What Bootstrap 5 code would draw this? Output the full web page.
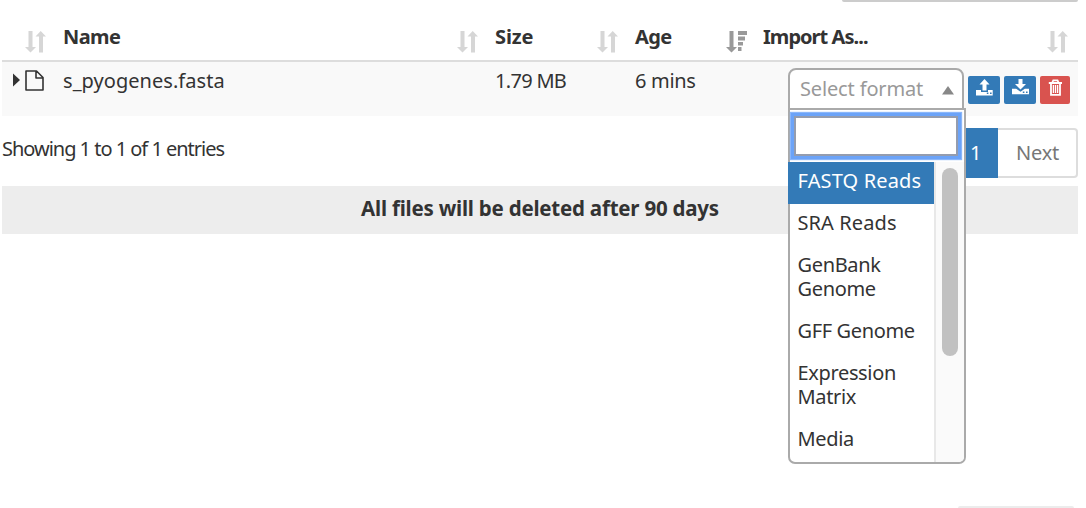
<!DOCTYPE html>
<html lang="en">
<head>
<meta charset="utf-8">
<title>Staging files</title>
<link href="https://cdn.jsdelivr.net/npm/bootstrap@5.3.0/dist/css/bootstrap.min.css" rel="stylesheet">
<style>
body{height:508px;width:1086px;overflow:hidden;background:#fff;color:#333;font-family:"Noto Sans","Open Sans",sans-serif;font-size:20px;line-height:28px}
.page{width:1076px;height:508px;margin-left:2px;position:relative}
.search-edge{width:236px;height:2px;background:#ccc;border-radius:0 0 4px 4px}
.files{table-layout:fixed;width:1076px;--bs-table-bg:transparent;color:#333;line-height:28px}
.files>thead>tr>th{height:59px;padding:21px 10px 0 7px;border-bottom:2px solid #ddd;vertical-align:top;letter-spacing:-.6px}
.files>thead>tr>th:last-child{padding-left:6px;letter-spacing:-.95px}
.files>tbody>tr>td{height:55px;padding:5px 6px 0 7px;border:0;background:#f9f9f9;vertical-align:top}
.files thead svg{margin-top:8px;flex:none;display:block}
.t{display:inline-block;white-space:nowrap}
.picker{width:176px;height:42px;border:2px solid #aaa;border-radius:8px 8px 0 0;background:#fff;color:#999;padding:4px 8px 0 10px;line-height:30px;letter-spacing:-.15px}
.picker svg{margin-top:12px}
.menu{left:0;top:40px;width:178px;height:356px;border:2px solid #aaa;border-radius:0 0 7px 7px;background:#fff;z-index:5}
.menu .query{width:164px;height:40px;margin:6px 0 6px 4px;border:2px solid #949cae;border-radius:0;box-shadow:0 0 0 3px #6ba3f8,0 0 1px 4px #8ab6fa;padding:0;outline:0;display:block}
.options{width:146px;margin-left:-2px;line-height:24px;letter-spacing:-.35px}
.options li{padding:7px 0 11px 9.5px;width:146px}
.options li.active{background:#337ab7;color:#fff;letter-spacing:.15px}
.options li.wide{letter-spacing:.1px}
.track{width:30px;height:300px;border-left:2px solid #e8e8e8;background:#fafafa;border-radius:0 0 5px 0;padding:6px 0 0 6px}
.thumb{width:16px;height:188px;border-radius:8px;background:#c1c1c1}
.act{height:28px;width:32px;border-radius:2px;padding:0;border:0;background:#337ab7;display:block}
.act.del{background:#d9534f;width:30px}
.act svg{display:block}
.pg{height:50px;line-height:46px;border:2px solid #ddd;padding:0}
.pg.one{width:46px;background:#337ab7;border-color:#337ab7;color:#fff;padding-left:16px}
.pg.next{width:80px;border-left:0;border-radius:0 4px 4px 0;color:#777;padding-left:18px;letter-spacing:-.2px}
.notice{height:48px;background:#ededed;font-size:20.5px;line-height:45px;letter-spacing:-.22px}
.foot-edge{left:956px;bottom:0;width:116px;height:2px;background:#ececec;border-radius:4px 4px 0 0}
</style>
</head>
<body>
<main class="page">
<div class="search-edge ms-auto"></div>
<table class="table files mb-0">
<colgroup><col style="width:54px"><col style="width:432px"><col style="width:140px"><col style="width:129px"><col style="width:321px"></colgroup>
<thead><tr>
<th><div class="d-flex justify-content-end"><svg width="21" height="22" viewBox="0 0 21 22" fill="#d6d6d6"><path d="M3.500 0h4v16H11l-5.500 5.500L0 16h3.500zM14 21.500V5.500h-3.500L15.700 0 21 5.500h-3v16z"/></svg></div></th>
<th><div class="d-flex justify-content-between"><span class="t">Name</span><svg width="21" height="22" viewBox="0 0 21 22" fill="#d6d6d6"><path d="M3.500 0h4v16H11l-5.500 5.500L0 16h3.500zM14 21.500V5.500h-3.500L15.700 0 21 5.500h-3v16z"/></svg></div></th>
<th><div class="d-flex justify-content-between"><span class="t" style="letter-spacing:-.1px">Size</span><svg width="21" height="22" viewBox="0 0 21 22" fill="#d6d6d6"><path d="M3.500 0h4v16H11l-5.500 5.500L0 16h3.500zM14 21.500V5.500h-3.500L15.700 0 21 5.500h-3v16z"/></svg></div></th>
<th><div class="d-flex justify-content-between"><span class="t">Age</span><svg width="21" height="22" viewBox="0 0 21 22" fill="#999"><path d="M3.500 0h4v16H11l-5.500 5.500L0 16h3.500zM12 0h9v4h-9zM12 5.500h7v4h-7zM12 11h5v3.500h-5zM12 16h3.500v4H12z"/></svg></div></th>
<th><div class="d-flex justify-content-between"><span class="t">Import As...</span><svg width="21" height="22" viewBox="0 0 21 22" fill="#d6d6d6"><path d="M3.500 0h4v16H11l-5.500 5.500L0 16h3.500zM14 21.500V5.500h-3.500L15.700 0 21 5.500h-3v16z"/></svg></div></th>
</tr></thead>
<tbody style="border-top:0"><tr>
<td><div class="d-flex" style="padding:2px 0 0 4px"><svg width="32" height="24" viewBox="0 0 32 24"><path d="M0 4.500 7 11l-7 6.500z" fill="#333"/><path d="M13 2h10.500l6.500 6.500V21H13zM23 2v7h7" fill="none" stroke="#333" stroke-width="1.600" stroke-linejoin="round"/></svg></div></td>
<td><span class="t" style="letter-spacing:.05px">s_pyogenes.fasta</span></td>
<td><span class="t" style="letter-spacing:-.7px">1.79 MB</span></td>
<td><span class="t" style="letter-spacing:-.3px">6 mins</span></td>
<td><div class="d-flex justify-content-end position-relative" style="padding:1px 2px 0 0">
<div class="position-relative me-1" style="height:42px">
<div class="picker d-flex justify-content-between"><span class="t">Select format</span><svg width="12" height="9" viewBox="0 0 12 9"><path d="M0 8.500 6 0l6 8.500z" fill="#888"/></svg></div>
<div class="menu position-absolute">
<input class="query" type="text" aria-label="Search formats">
<div class="d-flex">
<ul class="options list-unstyled mb-0">
<li class="active">FASTQ Reads</li><li class="wide">SRA Reads</li><li>GenBank<br>Genome</li><li>GFF Genome</li><li>Expression<br>Matrix</li><li>Media</li>
</ul>
<div class="track"><div class="thumb"></div></div>
</div></div></div>
<div class="d-flex gap-1" style="padding-top:8px">
<button class="act" aria-label="Upload"><svg width="32" height="28" viewBox="0 0 32 28" fill="#fff"><path d="M16.500 3l5 5.500h-3v6h-4v-6h-3zM8 14h5v2h7v-2h4.700v5.500H8z"/><path d="M18.800 16.500h1.600v1.500h-1.600zM22 16.500h1.600v1.500H22z" fill="#337ab7"/></svg></button>
<button class="act" aria-label="Download"><svg width="32" height="28" viewBox="0 0 32 28" fill="#fff"><path d="M14.500 3h4v5h3.500l-5.500 5.500L11 8h3.500zM8 12.700h4.200l4.300 3 4.300-3H25v5.500H8z"/><path d="M18.800 15.500h1.600V17h-1.600zM22 15.500h1.600V17H22z" fill="#337ab7"/></svg></button>
<button class="act del" aria-label="Delete"><svg width="30" height="28" viewBox="0 0 30 28" fill="none" stroke="#fff"><path d="M8.800 7h13.200M12.300 6.500l1-2.200h4.200l1 2.200M11 7.500v11.300h9V7.500" stroke-width="1.800"/><path d="M13.400 9v8M15.500 9v8M17.600 9v8" stroke-width="1.300"/></svg></button>
</div></div></td>
</tr></tbody></table>
<div class="d-flex justify-content-between" style="height:70px;padding-top:12px">
<div class="t" style="padding-top:7px;letter-spacing:-1.02px">Showing 1 to 1 of 1 entries</div>
<div class="d-flex"><div class="pg one">1</div><div class="pg next">Next</div></div>
</div>
<div class="notice text-center fw-bold"><span class="t">All files will be deleted after 90 days</span></div>
<div class="foot-edge position-absolute"></div>
</main>
<script src="https://cdn.jsdelivr.net/npm/bootstrap@5.3.0/dist/js/bootstrap.bundle.min.js"></script>
</body>
</html>
